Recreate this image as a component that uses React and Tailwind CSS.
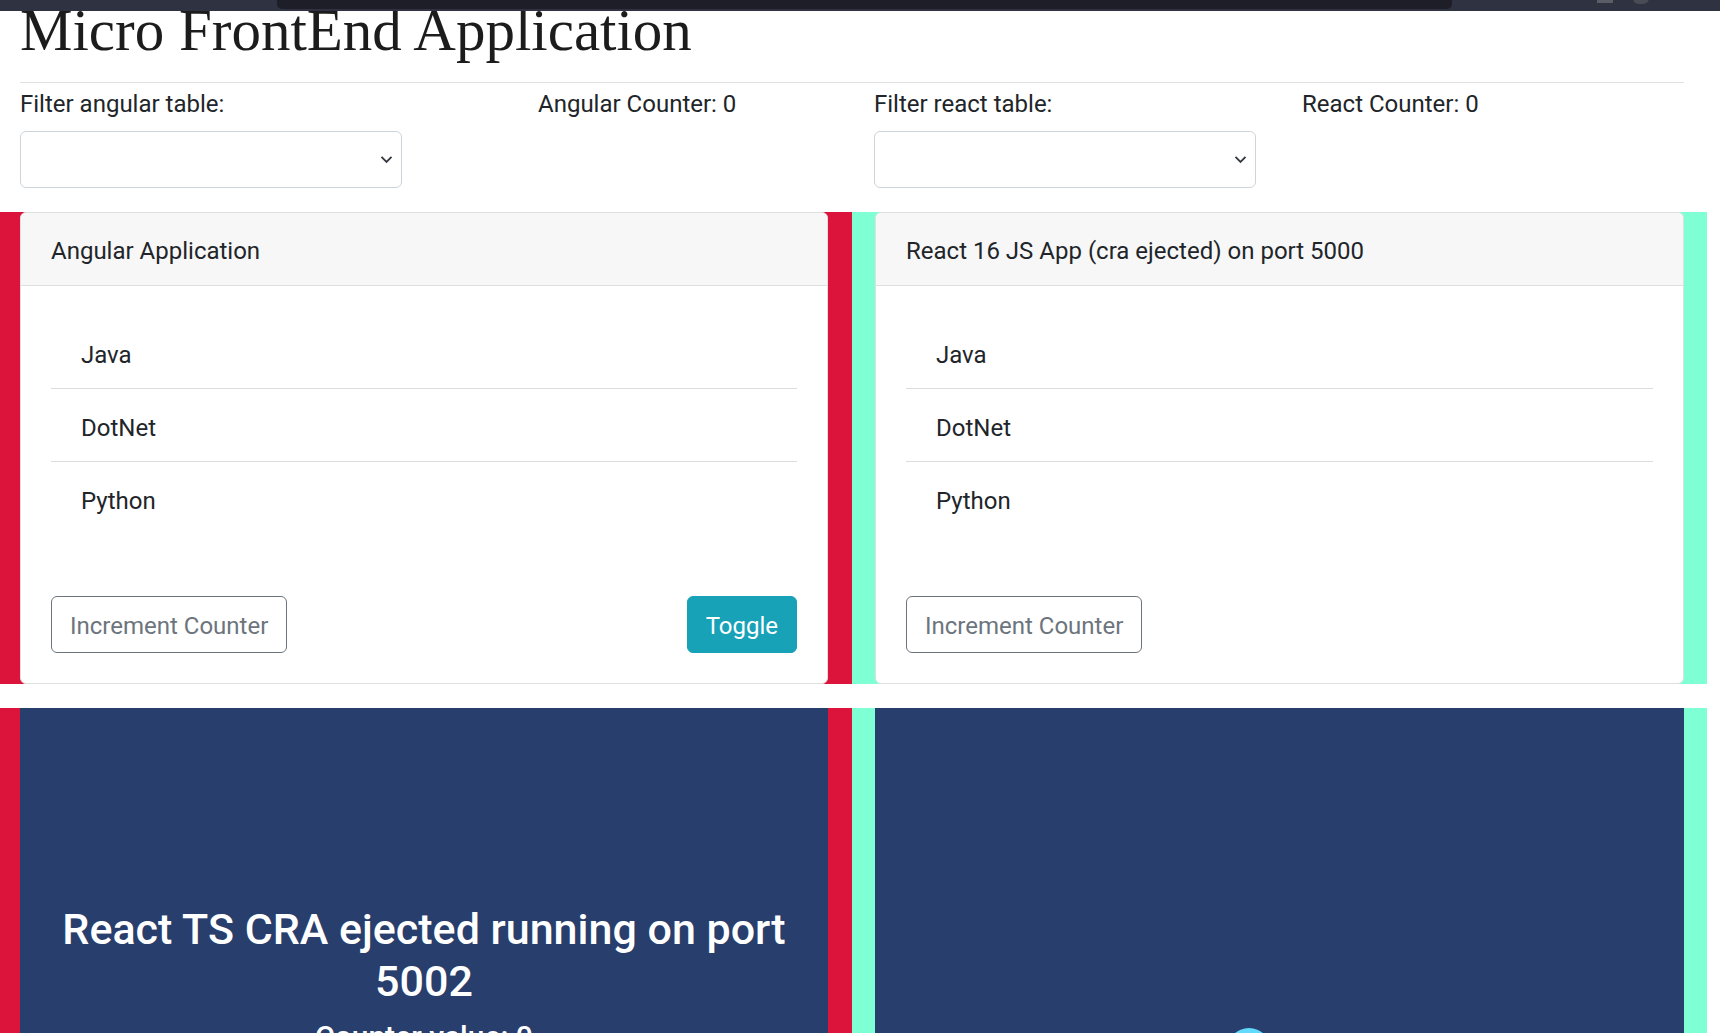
import React from "react";

const languages = ["Java", "DotNet", "Python"];

function Chevron() {
  return (
    <svg width="13" height="9" viewBox="0 0 13 9" className="block">
      <polyline points="1.5,1.8 6.5,6.8 11.5,1.8" fill="none" stroke="#343a40" strokeWidth="1.9" />
    </svg>
  );
}

function FilterSelect() {
  return (
    <div className="flex h-[57px] w-[382px] items-center justify-end rounded-[6px] border border-[#ced4da] bg-white pr-[8px]">
      <Chevron />
    </div>
  );
}

function AppCard({ title, showToggle }) {
  return (
    <div className="overflow-hidden rounded-[6px] border border-[#dfdfdf] bg-white">
      <div className="border-b border-[#dfdfdf] bg-[#f7f7f7] px-[30px] pb-[16px] pt-[20px] leading-[36px]">
        {title}
      </div>
      <div className="p-[30px]">
        <ul>
          {languages.map((lang, i) => (
            <li
              key={lang}
              className={
                i < languages.length - 1
                  ? "border-b border-[#dcdcdc] px-[30px] pb-[15px] pt-[21px] leading-[36px]"
                  : "px-[30px] pb-[15px] pt-[21px] leading-[36px]"
              }
            >
              {lang}
            </li>
          ))}
        </ul>
        <div className="mt-[62px] flex items-center justify-between">
          <button className="h-[57px] rounded-[6px] border border-[#6c757d] px-[18px] pt-[2px] leading-[36px] text-[#6c757d]">
            Increment Counter
          </button>
          {showToggle && (
            <button className="h-[57px] rounded-[6px] border border-[#17a2b8] bg-[#17a2b8] px-[18px] pt-[2px] leading-[36px] text-white">
              Toggle
            </button>
          )}
        </div>
      </div>
    </div>
  );
}

export default function App() {
  return (
    <div className="relative h-[1033px] w-[1720px] overflow-hidden bg-white font-['Roboto',sans-serif] text-[24px] text-[#212529]">
      {/* browser chrome strip over the page */}
      <div className="absolute left-0 top-0 z-10 flex h-[11px] w-full bg-[#2f3240]">
        <div className="ml-[277px] h-[9px] w-[1175px] rounded-b-[5px] bg-[#1d1e27]" />
        <div className="ml-[145px] h-[3px] w-[16px] bg-[#5b5d66]" />
        <div className="ml-[20px] -mt-[8px] h-[12px] w-[16px] rounded-full bg-[#4a4c55]" />
      </div>

      {/* header */}
      <div className="pl-[20px] pr-[36px]">
        <h1 className="mb-[22px] font-['Liberation_Serif',serif] text-[59px] font-normal leading-[60px] text-[#1c1c1c]">
          Micro FrontEnd Application
        </h1>
        <hr className="border-t border-[#e2e2e2]" />
        <div className="mt-[3px] flex">
          <div className="w-[518px]">
            <div className="mb-[9px] leading-[36px]">Filter angular table:</div>
            <FilterSelect />
          </div>
          <div className="w-[336px] leading-[36px]">Angular Counter: 0</div>
          <div className="w-[428px]">
            <div className="mb-[9px] leading-[36px]">Filter react table:</div>
            <FilterSelect />
          </div>
          <div className="flex-1 leading-[36px]">React Counter: 0</div>
        </div>
      </div>

      {/* micro frontends row */}
      <div className="mt-[24px] flex">
        <div className="w-[852px] bg-[#dc143c] pl-[20px] pr-[24px]">
          <AppCard title="Angular Application" showToggle />
        </div>
        <div className="w-[855px] bg-[#7fffd4] px-[23px]">
          <AppCard title="React 16 JS App (cra ejected) on port 5000" />
        </div>
      </div>

      {/* second row */}
      <div className="mt-[24px] flex">
        <div className="w-[852px] bg-[#dc143c] pl-[20px] pr-[24px]">
          <div className="h-[400px] bg-[#283e6c] px-[20px] pt-[195px] text-center text-white">
            <h3 className="text-[43px] font-medium leading-[52px]">
              React TS CRA ejected running on port 5002
            </h3>
            <p className="mt-[10px] text-[30px] font-medium leading-[40px]">Counter value: 0</p>
          </div>
        </div>
        <div className="w-[855px] bg-[#7fffd4] px-[23px]">
          <div className="h-[400px] bg-[#283e6c] pl-[352px] pt-[320px]">
            <svg width="44" height="44" viewBox="0 0 44 44" className="block">
              <circle cx="22" cy="22" r="22" fill="#61dafb" />
            </svg>
          </div>
        </div>
      </div>
    </div>
  );
}
